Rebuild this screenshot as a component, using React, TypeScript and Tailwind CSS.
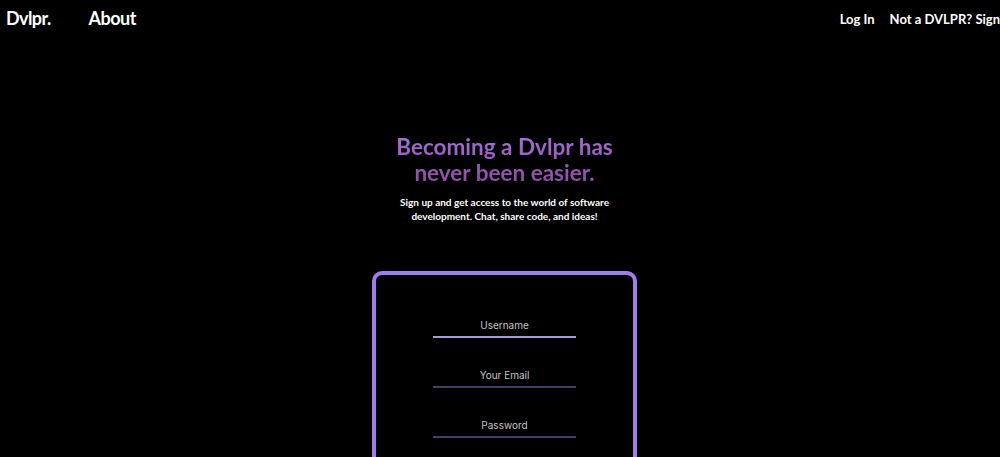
import React from 'react';

const App: React.FC = () => {
  return (
    <div className="min-h-[457px] w-full overflow-hidden bg-black text-white font-['Lato','Noto_Sans',sans-serif]">
      {/* Navbar */}
      <nav className="flex h-9 items-center justify-between">
        <div className="flex items-center">
          <a href="#" className="ml-[6px] text-[18px] font-bold tracking-[-0.6px]">
            Dvlpr.
          </a>
          <a href="#" className="ml-[38px] text-[18px] font-bold tracking-[-0.5px]">
            About
          </a>
        </div>
        <div className="-mr-[20px] mt-[3px] flex shrink-0 items-center whitespace-nowrap text-[13px] font-bold">
          <a href="#">Log In</a>
          <a href="#" className="ml-[15px]">
            Not a DVLPR? Sign Up
          </a>
        </div>
      </nav>

      {/* Hero */}
      <div className="flex flex-col items-center pl-[9px]">
        <h1 className="mt-[98px] bg-gradient-to-b from-[#a272dc] to-[#8e4a9f] bg-clip-text text-center text-[22.5px] font-bold leading-[26px] text-transparent">
          Becoming a Dvlpr has
          <br />
          never been easier.
        </h1>
        <p className="mt-[9px] text-center text-[10px] font-bold leading-[14px]">
          Sign up and get access to the world of software
          <br />
          development. Chat, share code, and ideas!
        </p>

        {/* Signup card */}
        <div className="mt-[48px] flex w-[265px] flex-col items-center rounded-[10px] border-4 border-[#a07ee9] pb-10 pt-[39px]">
          <form className="flex w-[143px] flex-col gap-[26px] font-['Inter',sans-serif]">
            <input
              type="text"
              placeholder="Username"
              className="h-[24px] w-full border-b-2 border-[#a59ad8] bg-transparent text-center text-[10px] text-white outline-none placeholder:text-[#c4c4c4]"
            />
            <input
              type="email"
              placeholder="Your Email"
              className="h-[24px] w-full border-b-2 border-[#463c68] bg-transparent text-center text-[10px] text-white outline-none placeholder:text-[#c4c4c4]"
            />
            <input
              type="password"
              placeholder="Password"
              className="h-[24px] w-full border-b-2 border-[#463c68] bg-transparent text-center text-[10px] text-white outline-none placeholder:text-[#c4c4c4]"
            />
            <button
              type="submit"
              className="mt-2 rounded-lg bg-[#a07ee9] py-2 text-[12px] font-bold text-black"
            >
              Sign Up
            </button>
          </form>
        </div>
      </div>
    </div>
  );
};

export default App;
